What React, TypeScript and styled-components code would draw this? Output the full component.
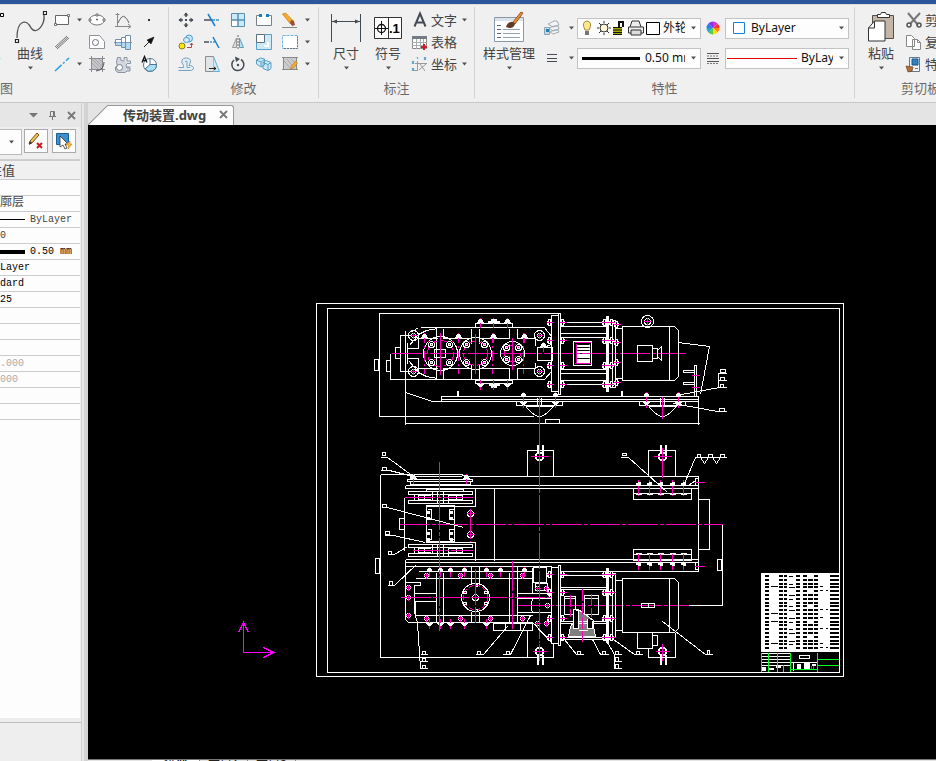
import React from "react";
import styled, { createGlobalStyle } from "styled-components";

const GlobalStyle = createGlobalStyle`
  * { box-sizing: border-box; }
  body { margin: 0; overflow: hidden; background: #f0f0f0; }
  button, select { font: inherit; color: inherit; }
`;

const Page = styled.div`
  height: 100vh;
  display: flex;
  flex-direction: column;
  font: 13px/18px "Noto Sans", "Noto Sans CJK SC", sans-serif;
  color: #444;
`;
const TitleStripe = styled.header`
  flex: 0 0 4px;
  background: #2b579a;
`;
const Ribbon = styled.nav`
  flex: 0 0 99px;
  display: flex;
  padding: 2px 0 4px;
  overflow: hidden;
  background: #f0f0f0;
  border-top: 1px solid #dcdcdc;
  border-bottom: 1px solid #c8c8c8;
`;
const Group = styled.section<{ $width: number; $hidden?: number }>`
  flex: 0 0 ${(p) => p.$width}px;
  margin-left: ${(p) => -(p.$hidden ?? 0)}px;
  display: flex;
  flex-direction: column;
  border-right: 1px solid #d2d2d2;
`;
const GroupBody = styled.div<{ $end?: boolean; $pad?: number }>`
  flex: 0 0 69px;
  display: flex;
  justify-content: ${(p) => (p.$end ? "flex-end" : "flex-start")};
  padding: 2px ${(p) => p.$pad ?? 4}px 0;
`;
const GroupLabel = styled.h2`
  margin: 3px 0 0;
  font-size: 13px;
  line-height: 18px;
  font-weight: 400;
  color: #6a6a6a;
  text-align: center;
  white-space: nowrap;
`;
const BigButton = styled.button<{ $width: number }>`
  flex: 0 0 ${(p) => p.$width}px;
  display: flex;
  flex-direction: column;
  align-items: center;
  padding: 0;
  border: 0;
  background: none;
  line-height: 18px;
  white-space: nowrap;
  > svg { flex-shrink: 0; }
  > svg:first-child { margin-bottom: 1px; }
  > svg:last-child { margin-top: 4px; }
`;
const SmallGrid = styled.div<{ $columns: string }>`
  display: grid;
  grid-template-columns: ${(p) => p.$columns};
  grid-template-rows: repeat(3, 22px);
`;
const IconButton = styled.button<{ $drop?: boolean }>`
  display: flex;
  align-items: center;
  justify-content: ${(p) => (p.$drop ? "flex-start" : "center")};
  gap: 6px;
  padding: 0;
  border: 0;
  background: none;
  svg { flex-shrink: 0; }
`;
const ToolList = styled.div<{ $gap?: number }>`
  display: flex;
  flex-direction: column;
  margin-left: ${(p) => p.$gap ?? 0}px;
`;
const ToolRow = styled.button`
  display: flex;
  align-items: center;
  height: 22px;
  padding: 0;
  border: 0;
  background: none;
  line-height: 20px;
  white-space: nowrap;
  > svg:first-child { margin-right: 1px; }
  > svg:nth-of-type(2) { margin-left: 5px; }
`;
const PropertyGrid = styled.div`
  display: grid;
  grid-template-columns: 26px 12px 124px 24px 124px;
  grid-template-rows: 30px 30px;
  align-items: center;
  align-content: start;
  justify-items: center;
  margin-top: 4px;
`;
const Combo = styled.label<{ $pad?: number }>`
  display: flex;
  align-items: center;
  width: 124px;
  height: 21px;
  padding: 0 4px 0 ${(p) => p.$pad ?? 4}px;
  border: 1px solid #c3c3c3;
  background: #fdfdfd;
  color: #111;
  font-size: 12px;
  > svg { flex-shrink: 0; }
`;
const ComboSelect = styled.select<{ $gap: number }>`
  flex: 1 1 0;
  min-width: 0;
  height: 18px;
  margin: 0 6px 0 ${(p) => p.$gap}px;
  padding: 0;
  border: 0;
  background: none;
  appearance: none;
  text-overflow: clip;
  overflow: hidden;
`;
const Workspace = styled.main`
  flex: 1 1 0;
  min-height: 0;
  display: flex;
`;
const Panel = styled.aside`
  flex: 0 0 82px;
  display: flex;
  flex-direction: column;
  overflow: hidden;
  background: #eee;
  border-right: 1px solid #cfcfcf;
`;
const PanelTitle = styled.div`
  flex: 0 0 24px;
  display: flex;
  align-items: center;
  justify-content: flex-end;
  gap: 10px;
  padding-right: 5px;
  background: #e6e6e6;
`;
const PanelTools = styled.div`
  flex: 0 0 32px;
  display: flex;
  gap: 4px;
  padding-top: 2px;
`;
const MiniCombo = styled.button`
  width: 22px;
  height: 26px;
  padding: 0 0 6px 2px;
  border: 1px solid #bbb;
  border-left: 0;
  background: #fdfdfd;
`;
const ToolBox = styled.button`
  width: 24px;
  height: 24px;
  margin-left: -2px;
  padding: 0;
  display: grid;
  place-items: center;
  border: 1px solid #aaa;
  background: #fdfdfd;
  & + & { margin-left: 0; }
`;
const Sheet = styled.div`
  flex: 1 1 0;
  margin-right: 1px;
  border-top: 1px solid #cfcfcf;
  background: #fdfdfd;
  overflow: hidden;
`;
const PropertyTable = styled.table`
  width: 108px;
  margin-left: -28px;
  border-collapse: collapse;
  table-layout: fixed;
  th, td {
    height: 16px;
    padding: 0 0 0 4px;
    border-bottom: 1px solid #ccc;
    font: 10px/15px "Liberation Mono", "Noto Sans CJK SC", monospace;
    text-align: left;
    white-space: pre;
    overflow: hidden;
  }
  th {
    height: 19px;
    padding-top: 3px;
    border-top: 1px solid #ccc;
    background: #f0f0f0;
    font-size: 13px;
  }
`;
const Cell = styled.td<{ $tone: string; $cjk?: boolean }>`
  color: ${(p) => p.$tone};
  && { font-size: ${(p) => (p.$cjk ? 12 : 10)}px; }
`;
const CellContent = styled.div`
  display: flex;
  align-items: center;
  height: 15px;
`;
const LineSwatch = styled.span<{ $weight: number }>`
  width: 49px;
  margin-right: 5px;
  border-top: ${(p) => p.$weight}px solid #000;
`;
const PanelFooter = styled.div`
  flex: 0 0 43px;
  padding-top: 4px;
  &::before {
    content: "";
    display: block;
    border-top: 1px solid #bdbdbd;
  }
`;
const Splitter = styled.div`
  flex: 0 0 6px;
  background: #d2d3d5;
  border-left: 2px solid #e8e8e8;
`;
const Document = styled.section`
  flex: 1 1 0;
  min-width: 0;
  display: flex;
  flex-direction: column;
`;
const TabBar = styled.div`
  flex: 0 0 22px;
  display: flex;
  align-items: flex-end;
  background: #e4e4e4;
`;
const TabSlant = styled.span`
  width: 20px;
  height: 20px;
  background: linear-gradient(to bottom right, #e4e4e4 47%, #999 49%, #999 51%, #fdfdfd 53%);
`;
const FileTab = styled.div`
  display: flex;
  align-items: center;
  height: 20px;
  padding: 0 5px 2px 15px;
  gap: 13px;
  border: 1px solid #999;
  border-width: 1px 1px 0 0;
  border-radius: 0 3px 0 0;
  background: #fdfdfd;
  font-weight: 700;
`;
const PlainButton = styled.button`
  display: flex;
  padding: 0;
  border: 0;
  background: none;
`;
const Canvas = styled.div`
  flex: 1 1 0;
  min-height: 0;
  overflow: hidden;
  background: #000;
  svg { display: block; }
`;
const LayoutTabs = styled.div`
  flex: 0 0 2px;
  display: flex;
  align-items: flex-start;
  padding-left: 64px;
  overflow: hidden;
  background: #e4e4e4;
  border-top: 1px solid #777;
`;
const LayoutTab = styled.button<{ $active?: boolean }>`
  flex: 0 0 48px;
  display: flex;
  justify-content: center;
  align-items: flex-start;
  height: 18px;
  padding: 0;
  border: 0;
  border-right: 1px solid #888;
  background: ${(p) => (p.$active ? "#fff" : "#e4e4e4")};
  font-size: 12px;
  line-height: 10px;
  font-weight: ${(p) => (p.$active ? 700 : 400)};
  color: #222;
`;

const Caret = () => (
  <svg width="5" height="4" viewBox="0 0 5 4" aria-hidden="true">
    <path d="M0 0.5h5L2.5 3.5z" fill="#505050" />
  </svg>
);
const Cross = () => (
  <svg width="9" height="9" viewBox="0 0 9 9" aria-hidden="true">
    <path d="M1 1l7 7M8 1L1 8" stroke="#777" strokeWidth="1.8" />
  </svg>
);

const INK = "#444b55";
const BLUE = "#3d94d1";
const PALE = "#cdeaf9";

const small: Record<string, React.ReactNode> = {
  rectangle: <><path d="M2.500 4.500h13v9h-13z" fill="#fff" stroke="#666" /><path d="M1.500 12.500h2v2h-2zM14.500 3.500h2v2h-2z" fill="#fff" stroke="#555" strokeWidth=".8" /></>,
  parallel: <path d="M2 14L14 3M4 16L16 5M3 15L15 4" stroke="#777" strokeWidth="1" />,
  guide: <path d="M2 16L16 3" stroke="#28a0dc" strokeWidth="1.500" strokeDasharray="9 2 2 2" />,
  ellipse: <><ellipse cx="9" cy="9" rx="7.500" ry="5" fill="#fff" stroke="#777" /><path d="M8 3h2v2H8zM1 8h2v2H1zM15 8h2v2h-2zM8 8.500h2M9 7.500v2" stroke="#555" fill="#fff" strokeWidth=".8" /></>,
  hole: <><path d="M1.500 2.500h10l5 6v7h-15z" fill="#fff" stroke="#8b939b" /><circle cx="7.500" cy="9.500" r="3" fill="none" stroke="#69737e" /></>,
  hatch: <><path d="M3 3h12v12H3z" fill="#c3c6ca" /><path d="M1 3.500h16M1 14.500h16M3.500 1v16M14.500 1v16" stroke="#8a8a8a" /><path d="M4 8l6 6M4 4l10 10M7 4l7 7M11 4l3 3" stroke="#9a9a9a" strokeWidth=".7" /><path d="M8 16q8-1 8-9" fill="none" stroke="#555" /></>,
  graph: <><path d="M3.500 2v13.500H17M1 15.500h3M1.500 3.500h4M14 13l3 2.500-3 2" fill="none" stroke="#888" /><path d="M4 12q4-9 7-6 3 3 4 6" fill="none" stroke="#666" /></>,
  shaft: <><path d="M1.500 6.500h6v6h-6zM7.500 4.500h4v10h-4zM11.500 2.500h5v14h-5z" fill="#fff" stroke="#7390a8" /><path d="M2 10h5v2H2zM8 10h3v4H8zM12 10h4v6h-4z" fill="#b4d9ef" /><path d="M0 9.500h18" stroke="#5687ac" strokeWidth=".8" /></>,
  gear: <><path d="M3.500 2.500h3l.5 3 3 .5 2-1 2 3-2 2 1 3h3v3h-3l-2 1.500H4l-2.500-2V12l2-1-1-4z" fill="#d3d8df" stroke="#8a93a0" /><path d="M10 5V2.500h3V6h3.500v2.500H13M13 12h3.500" fill="#e1e5eb" stroke="#8a93a0" /><circle cx="5.500" cy="12.500" r="3" fill="#fff" stroke="#777f8b" /></>,
  dot: <path d="M8 8h2v2H8z" fill="#333" />,
  arrow: <><path d="M4 14l5-5" stroke="#222" /><path d="M7 7l7-3-3 7z" fill="#111" stroke="#111" strokeWidth=".6" /></>,
  balloon: <><circle cx="10" cy="10" r="6.500" fill="#fff" stroke="#52758a" /><path d="M10 9.500h6.500A6.500 6.500 0 0 1 5 14z" fill="#a6dff6" stroke="#52758a" /><path d="M10 3v7" stroke="#52758a" /><path d="M2 7.500l2.500-6 2.500 6M3 5.500h3" fill="none" stroke="#111" strokeWidth="1.300" /></>,
  move: <><path d="M9 2v4M9 12v4M2 9h4M12 9h4" stroke={INK} strokeWidth="1.500" /><path d="M9 1.500L6.500 4.500h5zM9 16.500l-2.500-3h5zM1.500 9l3-2.500v5zM16.500 9l-3-2.500v5zM8 8h2v2H8z" fill={INK} /></>,
  trim: <><path d="M1 9h7" stroke="#707780" strokeWidth="2" /><path d="M9 9h8" stroke={BLUE} strokeWidth="1.500" strokeDasharray="3 1" /><path d="M5 3l7 12" stroke="#187fd0" strokeWidth="1.500" /></>,
  array: <><path d="M2.500 2.500h13v13h-13z" fill={PALE} stroke="#588eae" /><path d="M3 9h6v6H3z" fill="#fff" /><path d="M9 2v14M2 9h14" stroke="#588eae" strokeWidth="1.500" /></>,
  breakAt: <><path d="M1.500 4.500h15v10h-15z" fill="#fff" stroke="#777f88" /><path d="M6 4.500h6" stroke="#f0f0f0" strokeWidth="2" /><path d="M4 3h3v3H4zM11 3h3v3h-3z" fill="#167fc4" /></>,
  erase: <><path d="M1.500 3l3-1 8 8-3 3z" fill="#f5ad2c" stroke="#d07c1a" strokeWidth=".8" /><path d="M10 9l3 1 1 4-3 1-2-3z" fill="#9c4e3e" /><path d="M1 16.500h15" stroke="#888" /></>,
  copy: <><circle cx="12" cy="5.500" r="3.500" fill="#c8e6f7" stroke="#4e9bcc" /><ellipse cx="9.500" cy="7" rx="3" ry="2.500" fill="#d5ecf8" stroke="#4e9bcc" /><circle cx="5" cy="13" r="3" fill="#ffe500" stroke="#887b20" /><path d="M10 14.500h4.500v-4M13 12l1.500-2 1.500 2" fill="none" stroke="#ad4b4b" /></>,
  extend: <><path d="M1 9h5" stroke="#707780" strokeWidth="2" /><path d="M7 9h6" stroke={BLUE} strokeWidth="1.500" strokeDasharray="2 1" /><path d="M10 4l6 11" stroke="#187fd0" strokeWidth="1.500" /></>,
  mirror: <><path d="M7.500 5v9.500h-4z" fill="#ddd" stroke="#999" /><path d="M10.500 5v9.500h4z" fill="#b8e2f5" stroke="#5f9cbc" /><path d="M9 2v14" stroke="#666" strokeDasharray="2 1" /></>,
  scale: <><path d="M1.500 1.500h15v15h-15z" fill={PALE} stroke="#599fc7" /><path d="M1.500 1.500h8v8h-8z" fill="#fff" stroke="#60717d" /><path d="M13 9v4H9" fill="none" stroke="#fff" strokeWidth="2" /></>,
  selection: <><path d="M1.500 2.500h15v13h-15z" fill="#fff" stroke="#74b9e5" strokeDasharray="3 1" /><path d="M3 15.500h13.500v-12" fill="none" stroke="#777" strokeDasharray="2 1" /></>,
  offset: <path d="M1.500 12.500h5v-2L5 8V5q1-2 4-2 5 0 4.500 4l-1.500 3.500q4 0 4.500 2t-2 3h-13M8 6.500q3-1 2 1v5h3" fill="#e2eef6" stroke="#7ba2bd" />,
  stretch: <><path d="M2.500 1.500h8v15h-8z" fill="#e2e5e8" stroke="#888e96" /><path d="M10.500 1.500l6 15h-6" fill={PALE} stroke="#62aeda" /><path d="M6 13.500h7M11 12l2 1.500-2 1.500" fill="none" stroke="#222" /></>,
  rotate: <><path d="M5 5A6 6 0 1 0 12 4.500" fill="none" stroke={INK} strokeWidth="1.500" /><path d="M6 1.500l5 2.500-4 3z" fill={INK} /><circle cx="9" cy="10" r="1.200" fill={INK} /></>,
  solid: <path d="M1.500 5l4-2 4 1v6L6 12 1.500 9zM1.500 5L6 7v5M6 7l4-3M8 7.500l3-2 5 2v6l-3 2-5-2zM8 7.500l5 2v6M13 9.500l3-2" fill={PALE} stroke="#5b9fc4" />,
  editHatch: <><path d="M3 3h12v11H3z" fill="#ccc" /><path d="M2.500 2.500h13v12h-13zM1 2.500h16M1 14.500h16" fill="none" stroke="#888" /><path d="M3 6l7 8M6 4l7 9M10 4l5 5" stroke="#aaa" /><path d="M9.500 14l1-3 4-5 2 2-4 5z" fill="#f1ae36" stroke="#bd7e27" strokeWidth=".7" /></>,
};
const SmallIcon = ({ name }: { name: string }) => (
  <svg width="18" height="18" viewBox="0 0 18 18" fill="none" aria-hidden="true">{small[name]}</svg>
);
const Tool = ({ name, drop }: { name: string; drop?: boolean }) => (
  <IconButton aria-label={name} $drop={drop}>
    {name === "drop" ? <Caret /> : <SmallIcon name={name} />}
    {drop && <Caret />}
  </IconButton>
);

const drawTools = ["rectangle", "ellipse", "graph", "dot", "parallel", "hole", "shaft", "arrow", "guide", "hatch", "gear", "balloon"];
const firstColumn = ["rectangle", "parallel", "guide"];
const modifyTools = ["move", "trim", "array", "breakAt", "erase", "drop", "copy", "extend", "mirror", "scale", "selection", "drop", "offset", "stretch", "rotate", "solid", "editHatch", "drop"];

function RibbonBar() {
  return (
    <Ribbon>
      <Group $width={337} $hidden={168}>
        <GroupBody $end $pad={6}>
          <BigButton $width={52}>
            <svg width="46" height="34" viewBox="0 0 46 34"><path d="M42.500 4.500h3v3h-3z" fill="#fff" stroke="#000" /></svg>
            <span>多段线</span>
          </BigButton>
          <BigButton $width={46}>
            <svg width="34" height="34" viewBox="0 0 34 34" fill="none">
              <path d="M4 29C4 10 14 10 18 19C24 27 32 15 31 6" stroke="#555" strokeWidth="1.300" />
              <path d="M2.500 30.500h3v3h-3zM30.500 2.500h3v3h-3z" fill="#fff" stroke="#222" strokeWidth="1.200" />
            </svg>
            <span>曲线</span><Caret />
          </BigButton>
          <SmallGrid $columns="31px repeat(3, 26px)">
            {drawTools.map((n) =>
              n === "parallel"
                ? <IconButton key={n} aria-label={n} $drop><SmallIcon name={n} /></IconButton>
                : <Tool key={n} name={n} drop={firstColumn.includes(n)} />
            )}
          </SmallGrid>
        </GroupBody>
        <GroupLabel>绘图</GroupLabel>
      </Group>

      <Group $width={150}>
        <GroupBody>
          <SmallGrid $columns="repeat(5, 26px) 8px">
            {modifyTools.map((n, i) => <Tool key={i} name={n} />)}
          </SmallGrid>
        </GroupBody>
        <GroupLabel>修改</GroupLabel>
      </Group>

      <Group $width={156}>
        <GroupBody $pad={6}>
          <BigButton $width={42}>
            <svg width="32" height="34" viewBox="0 0 32 34"><path d="M1.500 5v28M30.500 5v28M2 12.500h28" stroke={INK} /><path d="M2 12.500l5-2v4zM30 12.500l-5-2v4z" fill={INK} /></svg>
            <span>尺寸</span><Caret />
          </BigButton>
          <BigButton $width={42}>
            <svg width="30" height="34" viewBox="0 0 30 34">
              <path d="M1.500 8.500h27v21h-27zM15.500 8.500v21" fill="#fff" stroke="#333" />
              <circle cx="8.500" cy="19.500" r="4" fill="none" stroke="#111" strokeWidth="1.300" /><path d="M2 19.500h13M8.500 12v14" stroke="#111" />
              <text x="16" y="24" fontFamily="Liberation Sans, sans-serif" fontSize="13" fontWeight="700">.1</text>
            </svg>
            <span>符号</span><Caret />
          </BigButton>
          <ToolList $gap={1}>
            <ToolRow>
              <svg width="20" height="18" viewBox="0 0 20 18"><path d="M4.500 15.500L10 2.500l5.500 13M6.500 11.500h7" fill="none" stroke={INK} strokeWidth="2" /></svg>
              文字<Caret />
            </ToolRow>
            <ToolRow>
              <svg width="20" height="18" viewBox="0 0 20 18"><path d="M2.500 3.500h14v12h-14z" fill="#fff" stroke="#888" /><path d="M2 3h15v3H2z" fill="#747d86" /><path d="M2 9.500h15M2 12.500h15M6.500 6v10M10.500 6v10M13.500 6v10" stroke="#aaa" /><path d="M11 14h6M14 11v6" stroke="#c32030" strokeWidth="2" /></svg>
              表格
            </ToolRow>
            <ToolRow>
              <svg width="20" height="18" viewBox="0 0 20 18"><path d="M7.500 6v10M5 8.500h12M9 15l7-6M10 9l5 7M4 15.500h4" stroke="#999" fill="none" /><path d="M2 6l2 3M4 6l-2 3M7 2l1 2M14 2l2 3M16 2l-2 3M2 13l2 3M4 13l-2 3" stroke={BLUE} /></svg>
              坐标<Caret />
            </ToolRow>
          </ToolList>
        </GroupBody>
        <GroupLabel>标注</GroupLabel>
      </Group>

      <Group $width={380}>
        <GroupBody>
          <BigButton $width={60}>
            <svg width="32" height="34" viewBox="0 0 32 34">
              <path d="M1.500 8.500h29v24h-29z" fill="#fff" stroke="#8799aa" /><path d="M2 9h28v3H2z" fill="#dae3ea" />
              <path d="M4 16.500h4M4 20.500h4M4 24.500h4M4 28.500h4" stroke="#566779" /><path d="M10 20.500h17M10 24.500h17M10 28.500h17" stroke="#8fa5b5" />
              <path d="M20 13L28 3l2 1-8 11z" fill="#e59138" stroke="#a15421" /><path d="M13 18q2-6 7-5l2 2q-2 6-9 3z" fill="#633b24" />
            </svg>
            <span>样式管理</span><Caret />
          </BigButton>
          <PropertyGrid>
            <svg width="18" height="18" viewBox="0 0 18 18"><path d="M5 5l6-3h3l2 4-6 2zM6 9l5-2h4l1 3-6 2zM7 13l4-2h4l1 2-6 2z" fill="#f4f4f4" stroke="#a1abb4" /><path d="M1.500 8.500h5v7h-5z" fill="#c7d8e4" stroke="#8aa5b8" /><path d="M3 10h3v3H3z" fill="#297eb0" /></svg>
            <Caret />
            <Combo>
              <svg width="80" height="20" viewBox="0 0 80 20">
                <path d="M3 12Q-1 4 5 3Q11 4 7 12z" fill="#ffe98f" stroke="#a4883f" /><path d="M3 13h4v4H3z" fill="#777" />
                <circle cx="22" cy="10" r="4" fill="#fff6d8" stroke="#333" /><path d="M22 3v2M22 15v2M15 10h2M27 10h2M17 5l2 2M25 13l2 2M27 5l-2 2M19 13l-2 2" stroke="#333" />
                <path d="M31 9h9v7h-9z" fill="#a6a600" /><path d="M31 9.500h9M31 12h9M31 14.500h9M31 16.500h9" stroke="#111" /><path d="M37 9V4h4v5" fill="none" stroke="#111" strokeWidth="2" />
                <path d="M48 9l2-6h7l2 6M46.500 9h15v6h-15z" fill="#eee" stroke="#333" /><path d="M49 12h10v5H49z" fill="#ddd" stroke="#333" />
                <path d="M64.500 4.500h13v12h-13z" fill="#fff" stroke="#000" />
              </svg>
              <ComboSelect $gap={1} aria-label="图层"><option>外轮廓层</option></ComboSelect>
              <Caret />
            </Combo>
            <svg width="14" height="14" viewBox="0 0 14 14">
              {["#f33", "#f80", "#fd1", "#5c4", "#2ac", "#37e", "#83e", "#d3c"].map((c, i) => (
                <path key={c} d="M7 7V.5A6.500 6.500 0 0 1 11.600 2.400z" fill={c} transform={`rotate(${i * 45 + 45} 7 7)`} />
              ))}
            </svg>
            <Combo>
              <svg width="16" height="16" viewBox="0 0 16 16"><path d="M3.500 2.500h11v11h-11z" fill="#fff" stroke="#1780dd" /></svg>
              <ComboSelect $gap={5} aria-label="颜色"><option>ByLayer</option></ComboSelect>
              <Caret />
            </Combo>
            <svg width="12" height="10" viewBox="0 0 12 10"><path d="M1 1.500h10M1 5.500h10M1 8.500h10" stroke={INK} /></svg>
            <Caret />
            <Combo>
              <svg width="58" height="3" viewBox="0 0 58 3"><path d="M0 0h58v3H0z" /></svg>
              <ComboSelect $gap={5} aria-label="线宽"><option>0.50 mm</option></ComboSelect>
              <Caret />
            </Combo>
            <svg width="12" height="12" viewBox="0 0 12 12"><path d="M0 1.500h12M0 6.500h12M0 9.500h12" stroke="#555" /><path d="M0 4h12M0 11.500h12" stroke="#777" strokeDasharray="2 1" /></svg>
            <Combo $pad={1}>
              <svg width="70" height="1" viewBox="0 0 70 1"><path d="M0 0h70v1H0z" fill="#e00000" /></svg>
              <ComboSelect $gap={4} aria-label="线型"><option>ByLayer</option></ComboSelect>
              <Caret />
            </Combo>
          </PropertyGrid>
        </GroupBody>
        <GroupLabel>特性</GroupLabel>
      </Group>

      <Group $width={132}>
        <GroupBody $pad={3}>
          <BigButton $width={46}>
            <svg width="28" height="34" viewBox="0 0 28 34"><path d="M5.500 6.500h21v23h-21z" fill="#c3b6a6" stroke="#554f49" /><path d="M10.500 8.500v-3h3l1-2h4l1 2h3v3z" fill="#fff" stroke="#333" /><path d="M1.500 19l6-7h10.500v20h-16.500z" fill="#fff" stroke="#333" /><path d="M1.500 19h6v-7" fill="none" stroke="#333" /></svg>
            <span>粘贴</span><Caret />
          </BigButton>
          <ToolList>
            <ToolRow><svg width="20" height="18" viewBox="0 0 20 18"><path d="M4 2l10 12M16 2L6 13" stroke="#777" strokeWidth="2" /><circle cx="5" cy="14" r="2" fill="none" stroke="#555" strokeWidth="1.500" /><circle cx="15" cy="14" r="2" fill="none" stroke="#555" strokeWidth="1.500" /></svg>剪切</ToolRow>
            <ToolRow><svg width="20" height="18" viewBox="0 0 20 18"><path d="M2.500 2.500h5l3 3v8h-8zM8.500 6.500h5l3 3v7h-8z" fill="#fff" stroke="#888" /><path d="M13.500 6.500v3h3" fill="none" stroke="#888" /></svg>复制</ToolRow>
            <ToolRow><svg width="20" height="18" viewBox="0 0 20 18"><path d="M5.500 2.500h10v14h-10z" fill="#eef3f7" stroke="#667788" /><path d="M8 4h6v6H8z" fill="#3480bf" stroke="#17568c" /><path d="M2 11l7 1-1 4-4 1z" fill="#b66f35" stroke="#70401f" strokeWidth=".7" /><path d="M11 13.500h3" stroke="#777" /></svg>特性匹配</ToolRow>
          </ToolList>
        </GroupBody>
        <GroupLabel>剪切板</GroupLabel>
      </Group>
    </Ribbon>
  );
}

type Row = { text?: string; line?: number; tone?: string; cjk?: boolean };
const rows: Row[] = [
  {},
  { text: "外轮廓层", cjk: true },
  { text: "ByLayer", line: 1 },
  { text: "1.000" },
  { text: "0.50 mm", line: 4, tone: "#000" },
  { text: "  ByLayer", tone: "#000" },
  { text: "Standard", tone: "#000" },
  { text: "ISO-25", tone: "#000" },
  {}, {}, {},
  { text: "1250.000", tone: "#aaa" },
  { text: "840.000", tone: "#aaa" },
  {}, {},
];

function PropertyPanel() {
  return (
    <Panel>
      <PanelTitle>
        <PlainButton aria-label="菜单"><svg width="10" height="6" viewBox="0 0 10 6"><path d="M1 1h9L5.500 5.500z" fill="#777" /></svg></PlainButton>
        <PlainButton aria-label="固定"><svg width="9" height="10" viewBox="0 0 9 10"><path d="M2.500 6V1.500h4V6M1 6.500h7M4.500 7v3M5.500 1v5" fill="none" stroke="#777" /></svg></PlainButton>
        <PlainButton aria-label="关闭"><Cross /></PlainButton>
      </PanelTitle>
      <PanelTools>
        <MiniCombo aria-label="对象类型"><Caret /></MiniCombo>
        <ToolBox aria-label="清除">
          <svg width="18" height="18" viewBox="0 0 18 18"><path d="M2 12l1-3 7-8 2 2-7 8z" fill="#f5c24d" stroke="#765323" /><path d="M2 13l1-4 2 2z" fill="#333" /><path d="M10 11l5 5M15 11l-5 5" stroke="#c32026" strokeWidth="2" /></svg>
        </ToolBox>
        <ToolBox aria-label="快速选择">
          <svg width="18" height="18" viewBox="0 0 18 18"><path d="M1.500 1.500h12v11h-12z" fill="#408fcd" stroke="#1a5f9d" /><path d="M5 4v11l3-2 2 4 2-1-2-4h3z" fill="#fff" stroke="#333" strokeWidth=".8" /><path d="M15 9l-4 4h3l-1 4 4-5h-2z" fill="#ffbd2e" stroke="#d58919" strokeWidth=".7" /></svg>
        </ToolBox>
      </PanelTools>
      <Sheet>
        <PropertyTable>
          <thead><tr><th>属性值</th></tr></thead>
          <tbody>
            {rows.map((r, i) => (
              <tr key={i}>
                <Cell $tone={r.tone ?? "#444"} $cjk={r.cjk}>
                  {r.text && <CellContent>{r.line && <LineSwatch $weight={r.line} />}{r.text}</CellContent>}
                </Cell>
              </tr>
            ))}
          </tbody>
        </PropertyTable>
      </Sheet>
      <PanelFooter />
    </Panel>
  );
}

const M = "#f0b";
type Pt = [number, number];
type Box = [number, number, number, number];

const Boxes = ({ items, fill = "none" }: { items: Box[]; fill?: string }) => (
  <>{items.map(([x, y, x2, y2], i) => <rect key={i} x={x} y={y} width={x2 - x} height={y2 - y} fill={fill} />)}</>
);
const Bolts = ({ at, r = 3 }: { at: Pt[]; r?: number }) => (
  <>{at.map(([x, y], i) => (
    <g key={i}>
      <circle cx={x} cy={y} r={r} />
      <path d={`M${x - r - 1} ${y}h${2 * r + 2}M${x} ${y - r - 1}v${2 * r + 2}`} stroke={M} />
    </g>
  ))}</>
);
const Studs = ({ at, flip }: { at: Pt[]; flip?: boolean }) => (
  <>{at.map(([x, y], i) => (
    <g key={i}>
      <path d={`M${x} ${y - 5}v10`} stroke={M} />
      <path d={flip ? `M${x - 3} ${y}h6l-2 2h-2z` : `M${x - 3} ${y}h6l-2 -3h-2z`} fill="#fff" />
    </g>
  ))}</>
);
const FlangeBolts = ({ xs, ys }: { xs: number[]; ys: number[] }) => (
  <>{xs.flatMap((x) => ys.map((y) => (
    <g key={`${x}-${y}`}>
      <path d={`M${x - 1} ${y - 3}h2v6h-2zM${x - 2} ${y - 2}v4M${x + 1} ${y - 1}h1v2h-1`} />
      <path d={`M${x - 3} ${y}h7`} stroke={M} />
    </g>
  )))}</>
);
const Ring = ({ c: [x, y], r, k }: { c: Pt; r: number; k: number }) => (
  <g>
    <circle cx={x} cy={y} r={r} />
    <circle cx={x} cy={y} r={r - 4} stroke={M} strokeDasharray="7 3" />
    <path d={`M${x} ${y - r - 4}V${y + r + 4}`} stroke={M} />
    {[[-k, -k], [k, -k], [-k, k], [k, k]].map(([dx, dy]) => (
      <g key={`${dx},${dy}`}>
        <path d={`M${x + dx - 3} ${y + dy - 3}l6 6M${x + dx + 3} ${y + dy - 3}l-6 6`} stroke={M} />
        <circle cx={x + dx} cy={y + dy} r="3" /><circle cx={x + dx} cy={y + dy} r="1" />
      </g>
    ))}
  </g>
);

const ElevationView = () => (
  <g>
    <path d="M378 313H559M379 313V416M378 416H533M405 371V424M405 423H699M698 401V424M405 392L432 401H698M441 401V396H698V401M441 399H698" />
    <Boxes items={[[374, 359, 378, 370], [386, 360, 390, 371], [395, 347, 400, 358], [434, 349, 445, 357], [537, 347, 552, 360], [475, 323, 512, 327], [475, 380, 512, 383], [545, 419, 559, 423]]} />
    <path d="M390 353V379H544L551 371M400 371V335H412M400 371H412M420 327H544L551 336V344L543 347M405 330V375M418 327L412 331M407 342V363M407 348H418V338H437M407 358H418V368H437M409 345L418 334L426 330L437 328M409 361L418 372L426 376L437 378" />
    <path d="M436 328V379M443 328V338H471V328M443 379V368H471V379M479 328V338H509V328M479 379V368H509V379M517 328V338H535M517 379V368H535V362M535 338V345M471 338V343M479 338V343M471 363V368M479 363V368" />
    <path d="M391 353H685" stroke={M} strokeDasharray="30 2 4 2" />
    <Ring c={[440, 353]} r={17} k={9} />
    <Ring c={[475, 353]} r={16} k={9} />
    <Ring c={[512, 353]} r={12} k={6} />
    <path d="M424 332V373M458 332V373M492 332V373M523 332V373" stroke={M} strokeDasharray="10 3 2 3" />
    <Bolts r={2} at={[[413, 335], [413, 371], [539, 335], [539, 371]]} />
    <g><circle cx="413" cy="335" r="5" /><circle cx="413" cy="371" r="5" /><circle cx="539" cy="335" r="5" /><circle cx="539" cy="371" r="5" /></g>
    <Studs at={[[424, 337], [458, 337], [493, 337], [524, 337], [480, 322], [507, 322], [493, 322], [543, 346]]} />
    <path d="M487 321H499M490 319H496M488 384H499M490 386H496" strokeWidth="2" />
    <Studs flip at={[[480, 384], [507, 384], [493, 384]]} />
    <Boxes items={[[551, 315, 558, 391], [558, 313, 560, 394], [606, 316, 608, 391], [612, 320, 615, 387], [615, 328, 622, 378], [573, 341, 591, 365], [637, 345, 652, 361], [652, 348, 657, 358]]} />
    <path d="M560 322H606M560 326H606M560 333H606M560 337H606M560 369H606M560 373H606M560 380H606M560 384H606M657 350L661 346V360L657 356M607 316V391" />
    <path d="M576 343V363M589 343V363M574 342H590M574 363H590" stroke={M} />
    <path d="M576 345H589M576 348H589M576 351H589M576 354H589M576 356H589M576 359H589M576 361H589" strokeWidth="2" />
    <path d="M622 326H674L678 330V376L674 380H622zM669 326V380M678 342L709 346L700 394" />
    <FlangeBolts xs={[549, 562, 604, 611]} ys={[322, 340, 365, 384]} />
    <FlangeBolts xs={[616]} ys={[324, 342, 362, 382]} />
    <circle cx="647" cy="321" r="6" /><Bolts at={[[647, 321]]} r={3} />
    <Boxes items={[[694, 365, 696, 396], [683, 370, 694, 372], [683, 382, 694, 384], [720, 369, 725, 372], [720, 377, 724, 380], [720, 384, 723, 387], [719, 408, 724, 411]]} />
    <path d="M681 394L719 387H726M718 387V373H726M718 380H726M673 403L717 411H726" />
    <path d="M691 375H699M691 387H699" stroke={M} />
    {[539, 662].map((x) => (
      <g key={x}>
        <path d={`M${x - 23} 401V405H${x + 23}V401M${x - 14} 406H${x + 14}M${x - 13} 407Q${x - 5} 416 ${x} 416T${x + 13} 407M${x - 2} 397V405M${x + 2} 397V405`} />
        <Studs at={[[x - 16, 396], [x + 16, 396]]} />
        <Studs flip at={[[x - 16, 402], [x + 16, 402]]} />
        <path d={`M${x} 396V418`} stroke={M} />
      </g>
    ))}
    <path d="M457 390V396M621 390V396" strokeWidth="2" />
  </g>
);

const bearing = (y: number) => `M408 ${y - 6}H472V${y - 3}H408zM408 ${y + 6}H472V${y + 3}H408zM414 ${y - 3}V${y + 3}M418 ${y - 3}V${y + 3}M424 ${y - 3}V${y + 3}M432 ${y - 6}V${y + 3}M437 ${y - 6}V${y + 6}M443 ${y - 6}V${y + 6}M448 ${y - 3}V${y + 6}M456 ${y - 3}V${y + 3}M462 ${y - 3}V${y + 3}M418 ${y - 2}H430M418 ${y + 2}H430M448 ${y - 2}H462M448 ${y + 2}H462`;

const PlanView = () => (
  <g>
    <path d="M380 474H461L465 476H698V571H560M380 474V657H553V643M461 476H410V479M405 485H698M405 488H698M405 485V488M475 488V506H454M475 560V542H454M494 488V560M405 559H698M405 562H698M405 559V566H551" />
    <Boxes items={[[527, 450, 553, 476], [648, 450, 675, 476], [407, 479, 472, 481], [410, 481, 470, 484], [426, 505, 454, 542], [426, 489, 463, 491], [399, 518, 404, 529], [633, 488, 691, 493], [633, 493, 691, 499], [633, 549, 691, 554], [633, 554, 691, 560], [698, 499, 709, 549], [695, 478, 698, 485], [695, 562, 698, 569], [717, 559, 721, 570], [375, 558, 379, 573]]} />
    <path d={bearing(497) + bearing(550)} />
    <path d="M404 550V497M427 509h4v10h-4M427 529h4v10h-4M453 509h-4v10h4M453 529h-4v10h4M426 506H454M426 541H454" />
    <path d="M428 510v3M428 516v3M428 531v3M428 537v3M451 510v3M451 516v3M451 531v3M451 537v3" strokeWidth="3" />
    <path d="M404 497H472M412 550H472M399 524H722M470 508V541M694 482H704M694 566H704" stroke={M} strokeDasharray="30 2 4 2" />
    <Bolts r={3} at={[[470, 513], [470, 534]]} />
    <Studs at={[[413, 478], [466, 478]]} />
    {[638, 649, 660, 672, 683].map((x) => (
      <g key={x}>
        <path d={`M${x} 479V495M${x} 552V569`} stroke={M} />
        <path d={`M${x - 2} 485v-2h4v2zM${x - 2} 562v2h4v-2z`} fill="#fff" />
        <path d={`M${x - 3} 494h6M${x - 3} 553h6M${x - 1} 482h3M${x - 1} 565h3`} />
      </g>
    ))}
    {[539, 662].map((x) => (
      <g key={x}>
        <path d={`M${x - 2} 444V453M${x + 3} 444V453M${x - 2} 654V664M${x + 3} 654V664`} strokeWidth="2" />
        <circle cx={x} cy="456" r="4" strokeWidth="2" /><circle cx={x} cy="651" r="4" strokeWidth="2" />
        <path d={`M${x - 9} 456H${x + 9}M${x - 7} 651H${x + 7}M${x} 447V477M${x} 643V660`} stroke={M} />
      </g>
    ))}
    <path d="M405 566V619L408 622H532M415 578H532M415 615H532M436 572V622M443 572V622M471 566V583M479 566V583M471 611V622M479 611V622M509 572V622M517 566V622M405 582H420V585H414V593H436V601H415V615M414 593V612L417 622M418 571H532M517 593H551M532 593V567M532 622V630M549 593V598M532 612Q529 605 532 599M505 623V630M520 623V630M527 630V657" />
    <Boxes items={[[517, 598, 551, 612], [493, 623, 532, 630], [533, 567, 546, 582], [535, 583, 547, 590]]} />
    <circle cx="475" cy="597" r="14" /><circle cx="475" cy="597" r="12" stroke={M} strokeDasharray="5 2" />
    <Bolts r={3} at={[[475, 597]]} />
    <path d="M463 591h3v2h-3zM463 602h3v2h-3zM484 591h3v2h-3zM484 602h3v2h-3zM475 584h2v2h-2zM475 609h2v2h-2z" />
    <Bolts r={2} at={[[426, 575], [460, 575], [490, 575], [522, 575], [426, 618], [460, 618], [490, 618], [522, 618], [408, 587], [408, 597], [408, 615], [537, 588], [546, 588], [537, 623], [546, 623], [547, 605]]} />
    <Studs at={[429, 440, 450, 464, 486, 500, 524].map((x) => [x, 571] as Pt)} />
    <Studs flip at={[429, 440, 450, 464, 486].map((x) => [x, 623] as Pt)} />
    <path d="M400 597H551M517 605H688M439 461V630M512 560V630M475 568V622M539 418V642" stroke={M} strokeDasharray="30 2 4 2" />
    <Boxes items={[[551, 567, 558, 643], [558, 565, 560, 645], [606, 568, 608, 642], [612, 573, 615, 637], [615, 580, 622, 630], [564, 596, 575, 614], [584, 595, 598, 614], [641, 603, 654, 607], [637, 632, 652, 648], [652, 635, 657, 645]]} />
    <path d="M560 575H606M560 587H606M560 589H606M560 621H606M560 623H606M560 637H606M560 639H606M622 578H674L678 582V628L674 632H622zM669 578V632M648 648V657H675V632M648 603V607M564 598H575M584 598H598M688 605H722V524M607 568V642" />
    <path d="M573 610L578 609L593 620V626L595 636H568L570 626L573 622z" fill="url(#hatching)" />
    <path d="M573 609L578 610V628H573zM587 618V628H592V620M578 630H587" fill="#000" />
    <FlangeBolts xs={[549, 562, 604, 611]} ys={[574, 592, 618, 637]} />
    <path d="M582 588V641M570 594V616M591 593V616" stroke={M} strokeDasharray="12 2" />
    <Leaders />
  </g>
);

const Leaders = () => (
  <>
    <path d="M380 457H387L413 476M380 470H389L413 476M381 507H387L463 527M384 535H393L425 542M387 554H394L407 546M387 585H394L416 564M620 457H628L667 492M684 483L695 457H726M700 457L704 463L708 457M712 457L716 463L720 457M688 485L695 480M662 621L705 654H712M564 639L576 654H583M592 639L600 654H608M607 642L614 654V668H621M614 654H621M614 661H621M613 639L634 654H642M475 654H483L507 626M502 654H510L530 615M417 623L420 668H427M420 654H427M420 661H427M533 623L551 642" />
    <Boxes items={[[382, 452, 385, 455], [382, 467, 386, 470], [382, 504, 386, 507], [385, 531, 389, 534], [388, 551, 391, 554], [389, 581, 392, 585], [622, 453, 626, 455], [697, 454, 700, 457], [708, 454, 712, 457], [720, 454, 724, 457], [707, 650, 709, 654], [577, 651, 580, 654], [602, 651, 605, 654], [615, 651, 618, 654], [615, 657, 618, 661], [615, 664, 618, 668], [636, 651, 639, 654], [477, 651, 480, 654], [506, 651, 509, 654], [422, 651, 425, 654], [422, 658, 425, 661], [422, 665, 425, 668]]} />
  </>
);

const blanks: [number, number][] = [[765, 769], [779, 783], [784, 787], [796, 800], [803, 807], [814, 818], [830, 839]];
const TitleBlock = () => (
  <g stroke="none">
    <rect x="761" y="573" width="78" height="80" fill="#fff" />
    {Array.from({ length: 20 }, (_, r) => 575 + Math.round(r * 3.8)).map((y, r) => (
      <g key={y} fill="#000">
        {blanks.map(([x, x2]) => <rect key={x} x={x} y={y} width={x2 - x} height="2" />)}
        {(r === 3 || r === 10 || r === 12 || r === 18) && <rect x="771" y={y} width="7" height="1" />}
        {(r === 3 || r === 11 || r === 18) && <rect x="820" y={y} width="3" height="1" />}
        {r % 3 !== 1 && <rect x="789" y={y + 1} width={r % 2 ? 6 : 4} height="1" />}
        {r % 4 !== 0 && <rect x="808" y={y} width="5" height="2" />}
        {r % 5 === 4 && <path d={`M820 ${y}h3v1h-3zM826 ${y}h2v1h-2z`} />}
      </g>
    ))}
    <rect x="761" y="652" width="78" height="20" fill="#000" />
    <path d="M761 653h29v1h-29zM761 656h29v1h-29zM761 659h29v1h-29zM761 662h56v1h-56zM761 665h29v1h-29zM762 667h4v4h-4zM768 668h6v2h-6zM776 666h5v2h-5zM793 662h1v9h-1zM797 664h4v5h-4zM804 663h6v7h-6zM812 664h4v2h-4z" fill="#fff" />
    <path d="M799.500 655.500h10v3h-10z" fill="none" stroke="#fff" />
    <path d="M761 653h1v19h-1zM768 653h1v19h-1zM777 653h1v19h-1zM790 653h1v19h-1zM817 653h1v19h-1zM817 659h22v1h-22zM817 665h22v1h-22zM790 669h27v1h-27zM783 665h1v7h-1z" fill="#0f2" />
    <path d="M811 666h1v3h-1zM813 666h1v3h-1z" fill={M} />
  </g>
);

const Drawing = () => (
  <svg width="848" height="634" viewBox="88 125 848 634" shapeRendering="crispEdges" role="img" aria-label="传动装置">
    <defs>
      <pattern id="hatching" width="2" height="2" patternUnits="userSpaceOnUse"><path d="M0 0h1v1H0zM1 1h1v1H1z" fill="#fff" /></pattern>
    </defs>
    <g transform="translate(.5 .5)" fill="none" stroke="#fff" strokeWidth="1">
      <Boxes items={[[316, 303, 843, 676], [327, 308, 839, 672]]} />
      <ElevationView />
      <PlanView />
      <path d="M243 652V622M238 632L243 622L248 632M243 652H273M263 647L273 652L263 657" stroke="#f0f" />
    </g>
    <TitleBlock />
  </svg>
);

export default function App() {
  return (
    <Page>
      <GlobalStyle />
      <TitleStripe />
      <RibbonBar />
      <Workspace>
        <PropertyPanel />
        <Splitter />
        <Document>
          <TabBar>
            <TabSlant />
            <FileTab>
              <span>传动装置.dwg</span>
              <PlainButton aria-label="关闭文件"><Cross /></PlainButton>
            </FileTab>
          </TabBar>
          <Canvas><Drawing /></Canvas>
          <LayoutTabs>
            <LayoutTab $active>模型</LayoutTab>
            <LayoutTab>布局1</LayoutTab>
            <LayoutTab>布局2</LayoutTab>
          </LayoutTabs>
        </Document>
      </Workspace>
    </Page>
  );
}
